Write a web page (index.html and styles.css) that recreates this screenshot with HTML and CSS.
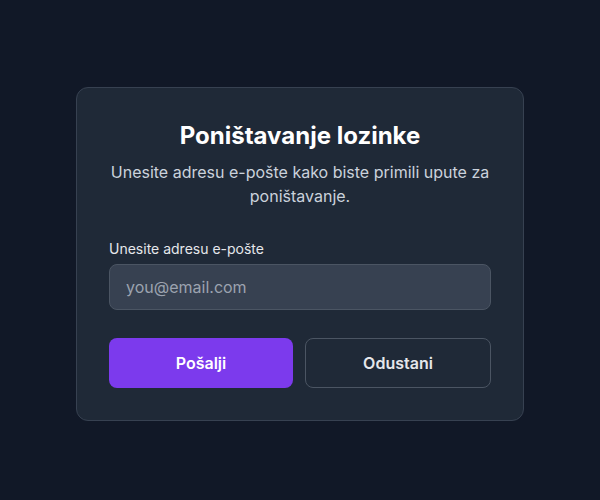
FILE: index.html
```html
<!DOCTYPE html>
<html lang="hr">
<head>
<meta charset="utf-8">
<title>Poništavanje lozinke</title>
<link rel="stylesheet" href="styles.css">
</head>
<body>
<main class="page">
  <section class="card">
    <h1 class="title">Poništavanje lozinke</h1>
    <p class="subtitle">Unesite adresu e-pošte kako biste primili upute za poništavanje.</p>
    <form class="form">
      <label class="label" for="email">Unesite adresu e-pošte</label>
      <input class="input" id="email" type="email" placeholder="you@email.com">
      <div class="actions">
        <button type="button" class="btn btn-primary">Pošalji</button>
        <button type="button" class="btn btn-secondary">Odustani</button>
      </div>
    </form>
  </section>
</main>
</body>
</html>
```
FILE: styles.css
```css
* { box-sizing: border-box; }
html, body { margin: 0; padding: 0; }
body {
  background: #111827;
  font-family: Inter, "Noto Sans", sans-serif;
  color: #f9fafb;
}
.page {
  min-height: 500px;
  padding-top: 8px;
  display: flex;
  align-items: center;
  justify-content: center;
}
.card {
  width: 448px;
  background: #1f2937;
  border: 1px solid #374151;
  border-radius: 12px;
  padding: 32px;
}
.title {
  margin: 0;
  text-align: center;
  font-size: 24px;
  line-height: 32px;
  font-weight: 700;
  color: #ffffff;
}
.subtitle {
  margin: 8px 0 0;
  text-align: center;
  font-size: 16px;
  line-height: 24px;
  color: #cbd2dc;
}
.form {
  margin-top: 31px;
  display: flex;
  flex-direction: column;
}
.label {
  font-size: 14px;
  line-height: 20px;
  font-weight: 400;
  color: #e5e7eb;
  margin-bottom: 5px;
}
.input {
  height: 46px;
  width: 100%;
  background: #374151;
  border: 1px solid #4b5563;
  border-radius: 8px;
  padding: 0 16px;
  font-family: inherit;
  font-size: 16px;
  color: #f9fafb;
  outline: none;
}
.input::placeholder { color: #9ca3af; }
.actions {
  margin-top: 28px;
  display: flex;
  gap: 12px;
}
.btn {
  flex: 1;
  height: 50px;
  border-radius: 8px;
  font-family: inherit;
  font-size: 16px;
  font-weight: 600;
  cursor: pointer;
}
.btn-primary {
  background: #7c3aed;
  border: none;
  color: #ffffff;
}
.btn-secondary {
  background: transparent;
  border: 1px solid #4b5563;
  color: #e5e7eb;
}
```
